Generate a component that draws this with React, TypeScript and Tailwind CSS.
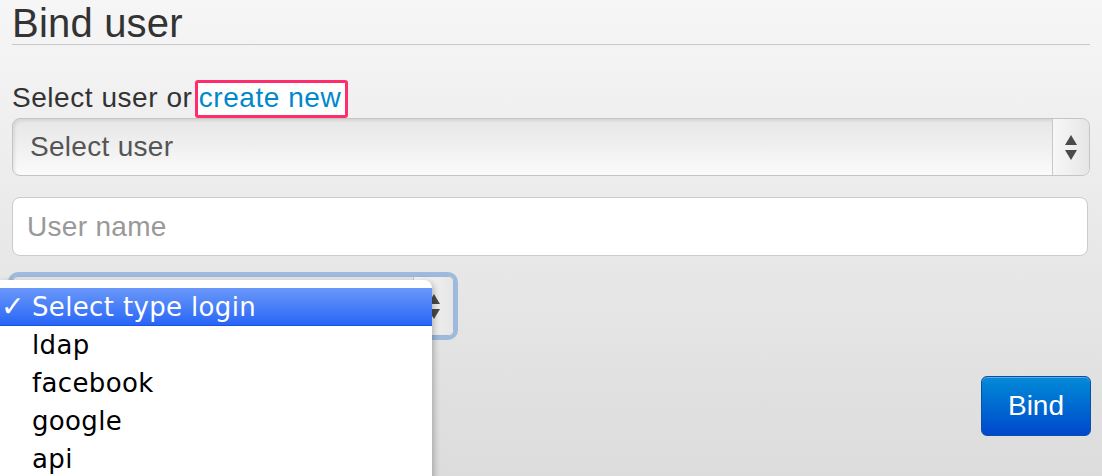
import React from 'react'

const SANS = { fontFamily: '"Liberation Sans", Arial, sans-serif' }
const MENU = { fontFamily: '"DejaVu Sans", "Liberation Sans", sans-serif' }

function Arrows() {
  return (
    <svg width="12" height="25" viewBox="0 0 12 25" className="block">
      <polygon points="6,0 12,10 0,10" fill="#4a4a4a" />
      <polygon points="0,15 12,15 6,25" fill="#4a4a4a" />
    </svg>
  )
}

const loginTypes = ['ldap', 'facebook', 'google', 'api']

export default function App() {
  return (
    <div
      className="relative h-[476px] w-full overflow-hidden bg-gradient-to-b from-[#f6f6f6] to-[#dcdcdc] text-[#333]"
      style={SANS}
    >
      <div className="px-3">
        {/* Legend */}
        <h1 className="mt-[3px] border-b border-[#c9c9c9] text-[40px] font-normal leading-[41px] tracking-[0.2px] text-[#333]">
          Bind user
        </h1>

        {/* Label */}
        <div className="mt-[35px] text-[28px] leading-[29px] tracking-[0.55px]">
          Select user or{' '}
          <a className="-ml-[6px] inline-block rounded-[3px] border-[3px] border-[#ff2d6e] bg-white pl-[1px] pr-[4px] pb-[3px] leading-[29px] text-[#0088cc]">
            create new
          </a>
        </div>

        {/* Select user */}
        <div className="flex h-[58px] overflow-hidden rounded-[8px] border border-[#c4c4c4] bg-gradient-to-b from-[#e7e7e7] via-[#f0f0f0] to-[#fbfbfb] shadow-[inset_2px_2px_3px_rgba(0,0,0,0.08)]">
          <div className="flex flex-1 items-center pl-[17px] text-[28px] tracking-[0.3px] text-[#555]">Select user</div>
          <div className="flex w-[37px] items-center justify-center border-l border-[#c8c8c8] bg-gradient-to-r from-[#f7f7f7] to-[#e6e6e6]">
            <Arrows />
          </div>
        </div>

        {/* User name */}
        <input
          placeholder="User name"
          className="mt-[21px] block h-[59px] w-[1076px] rounded-[8px] border border-[#cbcbcb] bg-white pl-[14px] text-[28px] tracking-[0.3px] text-[#555] outline-none placeholder:text-[#999]"
          style={SANS}
        />

        {/* Select type login (focused) */}
        <div className="mt-[20px] flex h-[60px] w-[442px] overflow-hidden rounded-[6px] border border-[#9fb6d3] bg-gradient-to-b from-[#e7e7e7] via-[#f0f0f0] to-[#fbfbfb] shadow-[0_0_0_4px_rgba(110,158,216,0.6)]">
          <div className="flex-1" />
          <div className="flex w-[40px] items-center justify-center border-l border-[#c8c8c8] bg-gradient-to-r from-[#f7f7f7] to-[#e6e6e6]">
            <Arrows />
          </div>
        </div>

        {/* Actions */}
        <div className="-mr-[1px] mt-[40px] flex justify-end">
          <button className="flex h-[60px] w-[110px] items-center justify-center rounded-[6px] border border-[#0b4fa8] bg-gradient-to-b from-[#0a8ad6] to-[#0046cc] text-[28px] text-white shadow-[inset_0_1px_0_rgba(255,255,255,0.3)]">
            Bind
          </button>
        </div>
      </div>

      {/* Native select popup */}
      <div
        className="absolute left-0 top-[280px] h-[220px] w-[432px] rounded-tr-[8px] bg-white pt-[8px] text-[26px] tracking-[0.35px] text-black shadow-[2px_2px_6px_rgba(0,0,0,0.25)]"
        style={MENU}
      >
        <div className="relative h-[38px] border-b border-[#1554ee] bg-gradient-to-b from-[#6a97f9] to-[#2765f6] pl-[32px] leading-[38px] text-white">
          <span className="absolute left-[1px] top-0 text-[28px]">✓</span>
          Select type login
        </div>
        {loginTypes.map((t) => (
          <div key={t} className="h-[38px] pl-[32px] leading-[38px]">
            {t}
          </div>
        ))}
      </div>
    </div>
  )
}
